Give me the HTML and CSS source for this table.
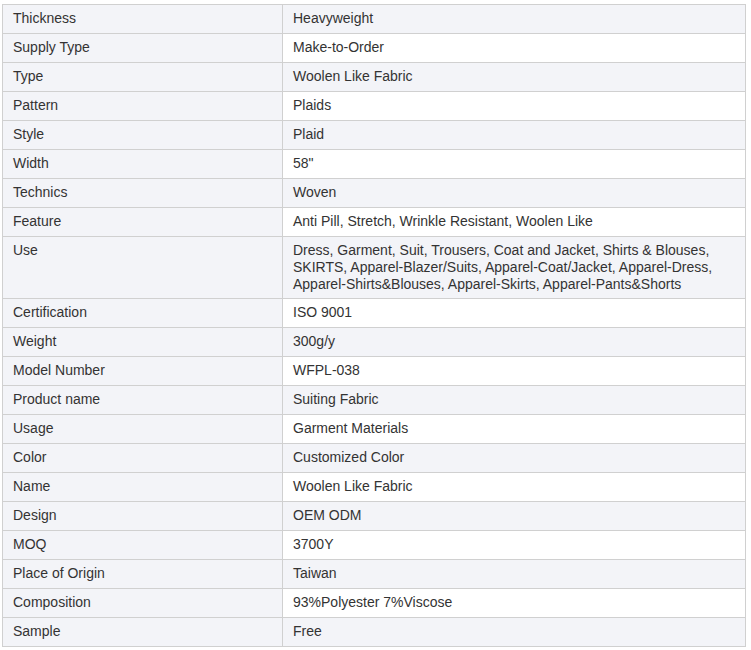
FILE: index.html
```html
<!DOCTYPE html>
<html>
<head>
<meta charset="utf-8">
<link rel="stylesheet" href="styles.css">
</head>
<body>
<div class="wrap">
<table class="spec">
<tbody>
<tr><td class="k">Thickness</td><td class="v">Heavyweight</td></tr>
<tr><td class="k">Supply Type</td><td class="v">Make-to-Order</td></tr>
<tr><td class="k">Type</td><td class="v">Woolen Like Fabric</td></tr>
<tr><td class="k">Pattern</td><td class="v">Plaids</td></tr>
<tr><td class="k">Style</td><td class="v">Plaid</td></tr>
<tr><td class="k">Width</td><td class="v">58"</td></tr>
<tr><td class="k">Technics</td><td class="v">Woven</td></tr>
<tr><td class="k">Feature</td><td class="v">Anti Pill, Stretch, Wrinkle Resistant, Woolen Like</td></tr>
<tr class="multi"><td class="k">Use</td><td class="v">Dress, Garment, Suit, Trousers, Coat and Jacket, Shirts &amp; Blouses,<br>SKIRTS, Apparel-Blazer/Suits, Apparel-Coat/Jacket, Apparel-Dress,<br>Apparel-Shirts&amp;Blouses, Apparel-Skirts, Apparel-Pants&amp;Shorts</td></tr>
<tr><td class="k">Certification</td><td class="v">ISO 9001</td></tr>
<tr><td class="k">Weight</td><td class="v">300g/y</td></tr>
<tr><td class="k">Model Number</td><td class="v">WFPL-038</td></tr>
<tr><td class="k">Product name</td><td class="v">Suiting Fabric</td></tr>
<tr><td class="k">Usage</td><td class="v">Garment Materials</td></tr>
<tr><td class="k">Color</td><td class="v">Customized Color</td></tr>
<tr><td class="k">Name</td><td class="v">Woolen Like Fabric</td></tr>
<tr><td class="k">Design</td><td class="v">OEM ODM</td></tr>
<tr><td class="k">MOQ</td><td class="v">3700Y</td></tr>
<tr><td class="k">Place of Origin</td><td class="v">Taiwan</td></tr>
<tr><td class="k">Composition</td><td class="v">93%Polyester 7%Viscose</td></tr>
<tr><td class="k">Sample</td><td class="v">Free</td></tr>
</tbody>
</table>
</div>
</body>
</html>
```
FILE: styles.css
```css
html, body {
  margin: 0;
  padding: 0;
  background: #fff;
}
.wrap {
  padding: 4px 0 0 2px;
}
.spec {
  border-collapse: collapse;
  width: 744px;
  font-family: "Liberation Sans", Arial, sans-serif;
  font-size: 14px;
  line-height: 17px;
  color: #333;
}
.spec td {
  border: 1px solid #d0d0d0;
  padding: 5px 10px 6px 10px;
  vertical-align: top;
  text-align: left;
}
.spec tr.multi td {
  padding-bottom: 5px;
}
.spec td.k {
  width: 259px;
  background: #f3f4f8;
}
.spec tr:nth-child(odd) td.v {
  background: #f3f4f8;
}
.spec tr:nth-child(even) td.v {
  background: #fff;
}
```
